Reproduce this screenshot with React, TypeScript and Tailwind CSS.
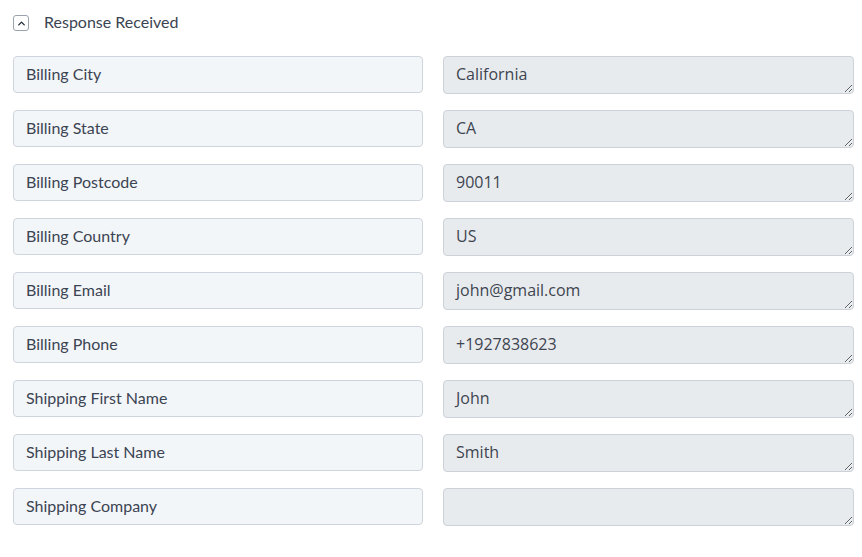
import { ChevronUp } from 'lucide-react';

const rows: [string, string][] = [
  ['Billing City', 'California'],
  ['Billing State', 'CA'],
  ['Billing Postcode', '90011'],
  ['Billing Country', 'US'],
  ['Billing Email', 'john@gmail.com'],
  ['Billing Phone', '+1927838623'],
  ['Shipping First Name', 'John'],
  ['Shipping Last Name', 'Smith'],
  ['Shipping Company', ''],
];

export default function App() {
  return (
    <div className="w-[862px] h-[557px] bg-white font-['Lato',sans-serif] text-[#3b4452]">
      <div className="flex items-center h-[46px] pl-[13px]">
        <span className="flex items-center justify-center w-[16px] h-[16px] border border-[#9aa3ad] rounded-[3px]">
          <ChevronUp className="w-[11px] h-[11px] text-[#222b3a]" strokeWidth={3} />
        </span>
        <span className="ml-[15px] text-[16px] pb-[2px]">Response Received</span>
      </div>
      <div className="grid grid-cols-[410px_411px] gap-x-[20px] gap-y-[16px] pl-[13px] pt-[10px]">
        {rows.map(([label, value]) => (
          <div key={label} className="contents">
            <div className="h-[37px] flex items-center px-[12px] pb-[2px] bg-[#f3f6f9] border border-[#cfd5dc] rounded-[4px] text-[16px]">
              {label}
            </div>
            <textarea
              readOnly
              value={value}
              rows={1}
              className="h-[38px] px-[12px] pt-[5px] pb-[7px] bg-[#e8ebee] border border-[#ccd2d8] rounded-[4px] text-[16px] leading-[24px] text-[#3e4550] font-['Open_Sans',sans-serif] resize-y outline-none"
            />
          </div>
        ))}
      </div>
    </div>
  );
}
